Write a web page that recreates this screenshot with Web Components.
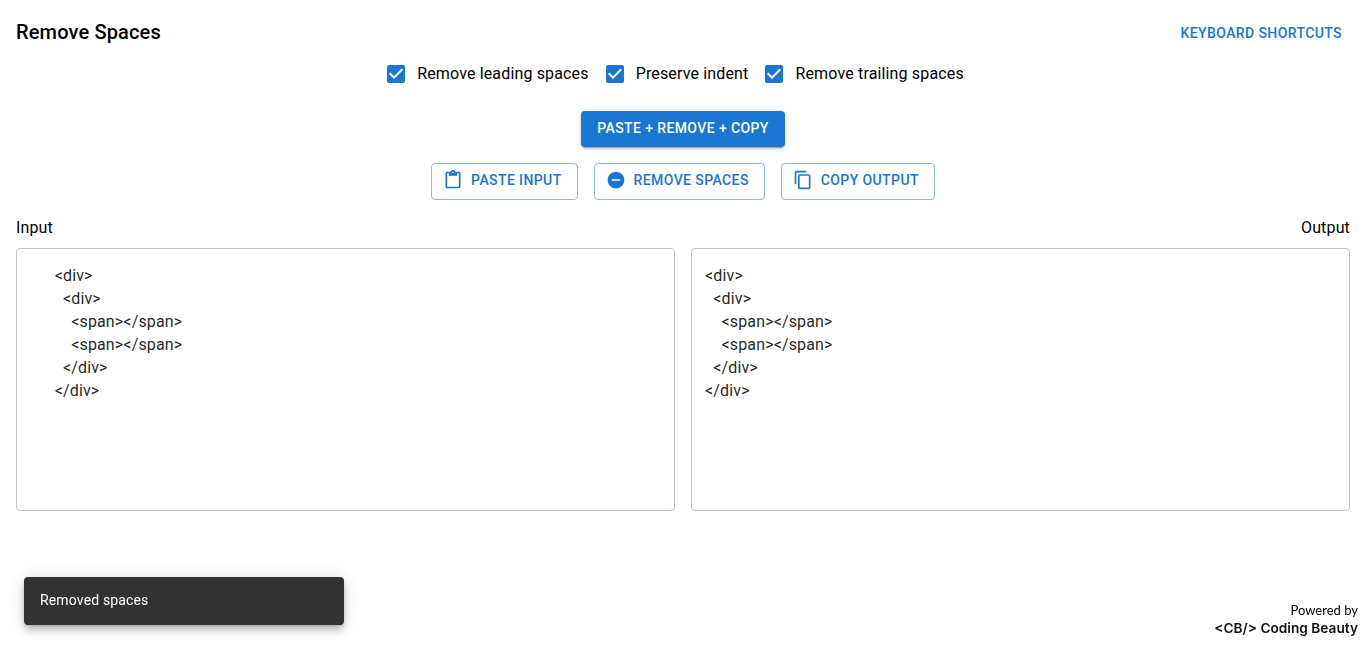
<!DOCTYPE html>
<html lang="en">
<head>
<meta charset="utf-8">
<title>Remove Spaces</title>
<style>
  html, body { margin: 0; height: 100%; background: #fff; }
  body { font-family: Roboto, "Liberation Sans", sans-serif; color: #000; overflow: hidden; }
</style>
</head>
<body>
<rs-app></rs-app>
<script>
const icons = {
	check: 'M19 3H5c-1.11 0-2 .9-2 2v14c0 1.1.89 2 2 2h14c1.11 0 2-.9 2-2V5c0-1.1-.89-2-2-2zm-9 14l-5-5 1.41-1.41L10 14.17l7.59-7.59L19 8l-9 9z',
	paste: 'M19 2h-4.18C14.4.84 13.3 0 12 0c-1.3 0-2.4.84-2.82 2H5c-1.1 0-2 .9-2 2v16c0 1.1.9 2 2 2h14c1.1 0 2-.9 2-2V4c0-1.1-.9-2-2-2zm-7 0c.55 0 1 .45 1 1s-.45 1-1 1-1-.45-1-1 .45-1 1-1zm7 18H5V4h2v3h10V4h2v16z',
	remove: 'M12 2C6.48 2 2 6.48 2 12s4.48 10 10 10 10-4.48 10-10S17.52 2 12 2zm5 11H7v-2h10v2z',
	copy: 'M16 1H4c-1.1 0-2 .9-2 2v14h2V3h12V1zm3 4H8c-1.1 0-2 .9-2 2v14c0 1.1.9 2 2 2h11c1.1 0 2-.9 2-2V7c0-1.1-.9-2-2-2zm0 16H8V7h11v14z'
};

class RsCheckbox extends HTMLElement {
	constructor() {
		super();
		this.attachShadow({ mode: 'open' });
	}

	connectedCallback() {
		this.shadowRoot.innerHTML = `
		<style>
			:host { display: inline-flex; align-items: center; margin: 0 16px 0 -11px; height: 42px; font-size: 16px; line-height: 24px; letter-spacing: 0.00938em; color: #000; }
			.box { width: 42px; height: 42px; display: flex; align-items: center; justify-content: center; }
			svg { width: 24px; height: 24px; fill: #1976d2; display: block; }
		</style>
		<span class="box"><svg viewBox="0 0 24 24"><path d="${icons.check}"/></svg></span>
		<span><slot></slot></span>
		`;
	}
}
customElements.define('rs-checkbox', RsCheckbox);

class RsButton extends HTMLElement {
	constructor() {
		super();
		this.attachShadow({ mode: 'open' });
	}

	connectedCallback() {
		const icon = this.getAttribute('icon');
		this.shadowRoot.innerHTML = `
		<style>
			:host { display: inline-flex; align-items: center; box-sizing: border-box; font-size: 14px; font-weight: 500; line-height: 24.5px; letter-spacing: 0.02857em; text-transform: uppercase; border-radius: 4px; white-space: nowrap; }
			:host([variant=contained]) { padding: 5px 16px 6.5px; background: #1976d2; color: #fff; box-shadow: 0 3px 1px -2px rgba(0,0,0,.2), 0 2px 2px 0 rgba(0,0,0,.14), 0 1px 5px 0 rgba(0,0,0,.12); }
			:host([variant=outlined]) { padding: 4px 15px 6px; border: 1px solid rgba(25,118,210,.5); color: #1976d2; }
			:host([variant=text]) { padding: 6px 8px; color: #1976d2; }
			svg { width: 20px; height: 20px; fill: currentColor; display: block; margin: 0 8px 0 -4px; }
		</style>
		${icon ? `<svg viewBox="0 0 24 24"><path d="${icons[icon]}"/></svg>` : ''}
		<span><slot></slot></span>
		`;
	}
}
customElements.define('rs-button', RsButton);

class RsCodeBox extends HTMLElement {
	constructor() {
		super();
		this.attachShadow({ mode: 'open' });
	}

	connectedCallback() {
		this.shadowRoot.innerHTML = `
		<style>
			:host { display: block; box-sizing: border-box; height: 263px; padding: 15px 13px; border: 1px solid #c4c4c4; border-radius: 4px; font-size: 16px; line-height: 23px; letter-spacing: 0.00938em; color: rgba(0,0,0,.87); overflow: hidden; }
			.code { white-space: pre; }
		</style>
		<div class="code"><slot></slot></div>
		`;
	}
}
customElements.define('rs-code-box', RsCodeBox);

class RsSnackbar extends HTMLElement {
	constructor() {
		super();
		this.attachShadow({ mode: 'open' });
	}

	connectedCallback() {
		this.shadowRoot.innerHTML = `
		<style>
			:host { position: fixed; left: 24px; bottom: 24px; width: 320px; height: 48px; box-sizing: border-box; padding: 0 16px 2px; display: flex; align-items: center; background: #323232; color: #fff; border-radius: 4px; font-size: 14px; line-height: 20px; letter-spacing: 0.01071em; box-shadow: 0 3px 5px -1px rgba(0,0,0,.2), 0 6px 10px 0 rgba(0,0,0,.14), 0 1px 18px 0 rgba(0,0,0,.12); }
		</style>
		<slot></slot>
		`;
	}
}
customElements.define('rs-snackbar', RsSnackbar);

class RsFooter extends HTMLElement {
	constructor() {
		super();
		this.attachShadow({ mode: 'open' });
	}

	connectedCallback() {
		this.shadowRoot.innerHTML = `
		<style>
			:host { position: fixed; right: 8px; bottom: 12px; display: flex; flex-direction: column; align-items: flex-end; color: #000; }
			.by { font-size: 13px; line-height: 18px; font-family: Lato, sans-serif; }
			.brand { margin-top: 1px; font-size: 13.7px; line-height: 17px; font-weight: 600; color: #111; font-family: Inter, sans-serif; }
		</style>
		<span class="by">Powered by</span>
		<span class="brand">&lt;CB/&gt; Coding Beauty</span>
		`;
	}
}
customElements.define('rs-footer', RsFooter);

class RsApp extends HTMLElement {
	constructor() {
		super();
		this.attachShadow({ mode: 'open' });
	}

	connectedCallback() {
		this.shadowRoot.innerHTML = `
		<style>
			:host { display: block; padding: 14px 16px 0; }
			.top { display: flex; justify-content: space-between; align-items: center; height: 36px; }
			h1 { margin: 0; font-size: 20px; font-weight: 500; line-height: 32px; letter-spacing: 0.0075em; }
			.top rs-button { margin-top: 2px; }
			.options { display: flex; justify-content: center; margin-top: 3px; }
			.main { display: flex; justify-content: center; margin-top: 16px; }
			.actions { display: flex; justify-content: center; gap: 16px; margin-top: 16px; }
			.labels { display: flex; justify-content: space-between; margin-top: 16.5px; font-size: 16px; line-height: 24px; letter-spacing: 0.00938em; color: #000; }
			.boxes { display: grid; grid-template-columns: 1fr 1fr; gap: 16px; margin-top: 8px; }
		</style>
		<div class="top">
			<h1>Remove Spaces</h1>
			<rs-button variant="text">Keyboard shortcuts</rs-button>
		</div>
		<div class="options">
			<rs-checkbox>Remove leading spaces</rs-checkbox>
			<rs-checkbox>Preserve indent</rs-checkbox>
			<rs-checkbox>Remove trailing spaces</rs-checkbox>
		</div>
		<div class="main"><rs-button variant="contained">Paste + Remove + Copy</rs-button></div>
		<div class="actions">
			<rs-button variant="outlined" icon="paste">Paste input</rs-button>
			<rs-button variant="outlined" icon="remove">Remove spaces</rs-button>
			<rs-button variant="outlined" icon="copy">Copy output</rs-button>
		</div>
		<div class="labels"><span>Input</span><span>Output</span></div>
		<div class="boxes">
			<rs-code-box>      &lt;div&gt;
        &lt;div&gt;
          &lt;span&gt;&lt;/span&gt;
          &lt;span&gt;&lt;/span&gt;
        &lt;/div&gt;
      &lt;/div&gt;</rs-code-box>
			<rs-code-box>&lt;div&gt;
  &lt;div&gt;
    &lt;span&gt;&lt;/span&gt;
    &lt;span&gt;&lt;/span&gt;
  &lt;/div&gt;
&lt;/div&gt;</rs-code-box>
		</div>
		<rs-snackbar>Removed spaces</rs-snackbar>
		<rs-footer></rs-footer>
		`;
	}
}
customElements.define('rs-app', RsApp);
</script>
</body>
</html>
